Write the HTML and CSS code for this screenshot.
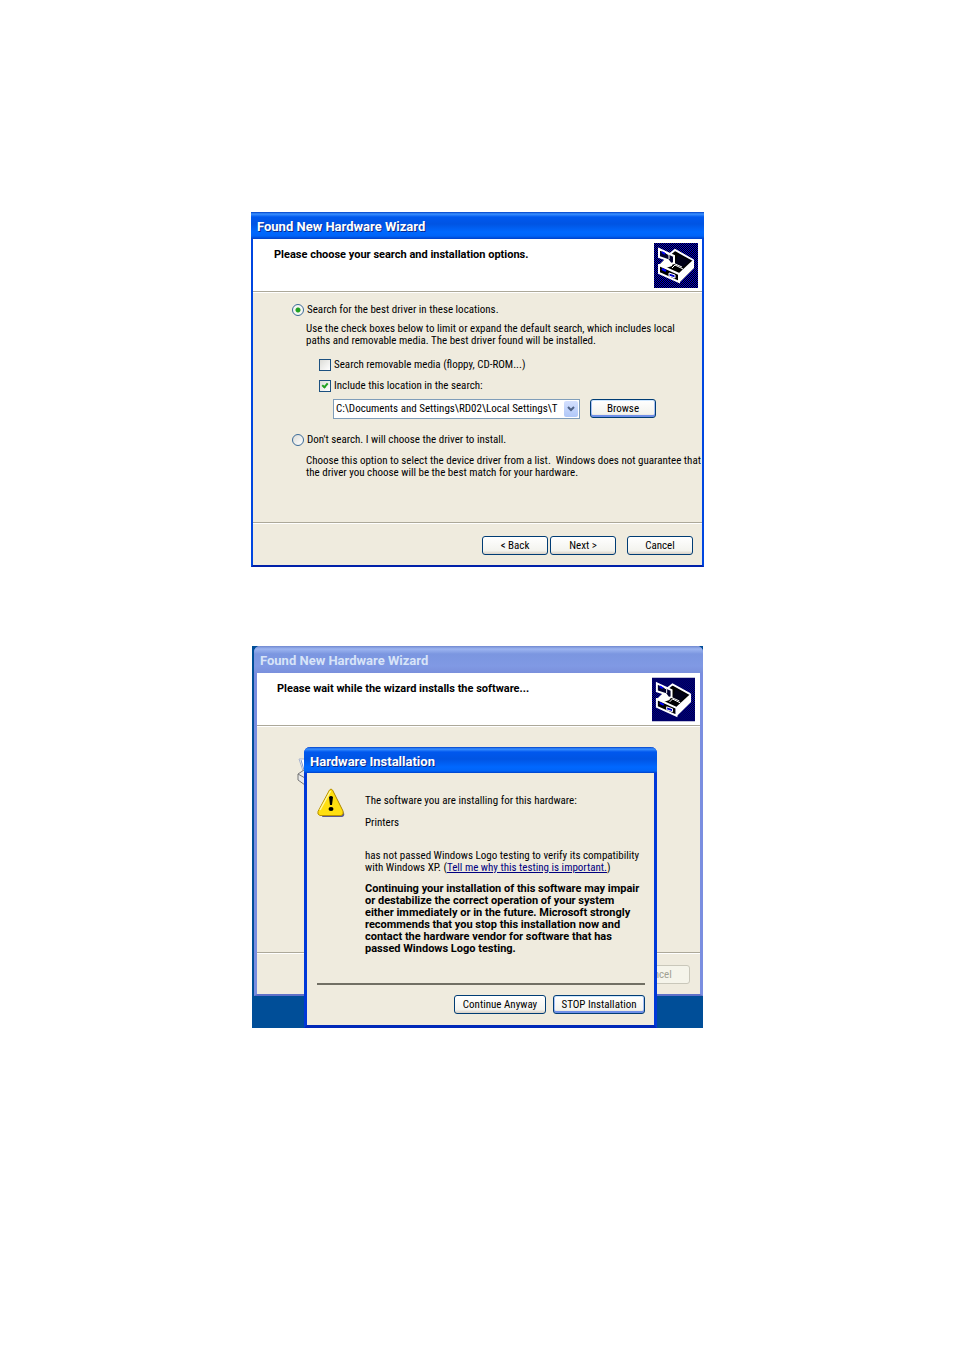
FILE: index.html
```
<!DOCTYPE html>
<html lang="en">
<head>
  <meta charset="UTF-8">
  <meta name="viewport" content="width=device-width, initial-scale=1.0">
  <title>Found New Hardware Wizard</title>
  <link rel="stylesheet" href="styles.css">
</head>
<body>
  <svg class="defs" aria-hidden="true">
    <defs>
      <pattern id="dots" width="4" height="4" patternUnits="userSpaceOnUse">
        <rect width="4" height="4" fill="#0000d0"/>
        <path d="M0 0h1v1H0zM2 0h1v1H2zM1 1h1v1H1zM3 1h1v1H3zM0 2h1v1H0zM2 2h1v1H2zM1 3h1v1H1zM3 3h1v1H3z" fill="#000"/>
      </pattern>
      <symbol id="device" viewBox="0 0 44 45">
        <rect width="44" height="45" fill="url(#dots)"/>
        <path d="M21 8l18 10-14 13-19-9z" fill="#000"/>
        <path d="M5 21l19 10v8L5 30z" fill="#000"/>
        <path d="M16 11l5-4 18 10" fill="none" stroke="#fff" stroke-width="2"/>
        <path d="M24 12l12 6-7 6-8-3z" fill="#000018"/>
        <path d="M18 25l3-3 8 4M19 20l9 4" fill="none" stroke="#fff" stroke-width="1"/>
        <path d="M25 30l15-14v9L25 40z" fill="#fff"/>
        <path d="M5 21v9l20 9v-8L5 22" fill="none" stroke="#fff" stroke-width="2"/>
        <path d="M5 22l6-6 8 2-1 5-6 2z" fill="#fff"/>
        <path d="M5 6l15 7v7l-3 1-3-4-9-3z" fill="#000030" stroke="#fff" stroke-width="2"/>
        <path d="M12 10l3 2v4" fill="none" stroke="#fff" stroke-width="1"/>
        <path d="M15 30l6 2v3l-6-2z" fill="#00c" stroke="#fff" stroke-width="1"/>
        <path d="M8 9l3 2M8 26l4 2" stroke="#0000ff" stroke-width="2"/>
      </symbol>
    </defs>
  </svg>

  <main class="page">
    <section class="window">
      <h2 class="title">Found New Hardware Wizard</h2>
      <header class="header">
        <h3>Please choose your search and installation options.</h3>
        <svg class="device" viewBox="0 0 44 45"><use href="#device"/></svg>
      </header>
      <form id="options" class="content">
        <label class="choice"><input type="radio" name="mode" checked> Search for the best driver in these locations.</label>
        <p class="note">Use the check boxes below to limit or expand the default search, which includes local<br>paths and removable media. The best driver found will be installed.</p>
        <label class="choice check first"><input type="checkbox"> Search removable media (floppy, CD-ROM...)</label>
        <label class="choice check"><input type="checkbox" checked> Include this location in the search:</label>
        <div class="location">
          <div class="combo">
            <select aria-label="Location">
              <option>C:\Documents and Settings\RD02\Local Settings\T</option>
            </select>
            <svg class="arrow" viewBox="0 0 14 16"><path d="M4 6l3 3 3-3" fill="none" stroke="#4d6185" stroke-width="2"/></svg>
          </div>
          <button type="button" class="focus">Browse</button>
        </div>
        <label class="choice second"><input type="radio" name="mode"> Don't search. I will choose the driver to install.</label>
        <p class="note">Choose this option to select the device driver from a list.&nbsp; Windows does not guarantee that<br>the driver you choose will be the best match for your hardware.</p>
      </form>
      <footer class="footer">
        <button type="button">&lt; Back</button>
        <button type="button">Next &gt;</button>
        <button type="button" class="cancel">Cancel</button>
      </footer>
    </section>

    <section class="desktop">
      <div class="window inactive">
        <h2 class="title">Found New Hardware Wizard</h2>
        <header class="header">
          <h3>Please wait while the wizard installs the software...</h3>
          <svg class="device" viewBox="0 0 44 45"><use href="#device"/></svg>
        </header>
        <div class="content">
          <svg class="printer" viewBox="0 0 30 30">
            <path d="M2 2h18l4 12H6z" fill="#fff" stroke="#a9b4cf"/>
            <path d="M4 3l3 10" stroke="#7f93c8"/>
            <path d="M1 17l6-4h20v10l-5 5H8l-7-5z" fill="#e8e8e8" stroke="#777"/>
            <path d="M1 17l7 4h19M8 21v7" fill="none" stroke="#777"/>
          </svg>
        </div>
        <footer class="footer">
          <button type="button" disabled>Cancel</button>
        </footer>
      </div>

      <div class="dialog" role="dialog" aria-labelledby="install-title">
        <h2 class="title" id="install-title">Hardware Installation</h2>
        <div class="message">
          <svg class="warning" viewBox="0 0 28 30">
            <path d="M16 3l11 22q1 3-2 4H5z" fill="#5a5a90"/>
            <path d="M12.500 2q1.500-2 3 0l10.500 21q1 4-2 4.500H3q-3-1-2-4z" fill="#ffdf10" stroke="#b89000"/>
            <path d="M13.500 3L3 22" stroke="#fff7a0" stroke-width="1.500"/>
            <path d="M12 9q2-2 4 0l-1 8h-2z" fill="#000"/>
            <ellipse cx="14" cy="21" rx="2.500" ry="2" fill="#000"/>
          </svg>
          <div class="text">
            <p>The software you are installing for this hardware:</p>
            <p>Printers</p>
            <p class="reason">has not passed Windows Logo testing to verify its compatibility<br>with Windows XP. (<a href="#">Tell me why this testing is important.</a>)</p>
            <p class="strong">Continuing your installation of this software may impair<br>or destabilize the correct operation of your system<br>either immediately or in the future. Microsoft strongly<br>recommends that you stop this installation now and<br>contact the hardware vendor for software that has<br>passed Windows Logo testing.</p>
          </div>
        </div>
        <div class="actions">
          <button type="button">Continue Anyway</button>
          <button type="button" class="focus">STOP Installation</button>
        </div>
      </div>
    </section>
  </main>
</body>
</html>
```
FILE: styles.css
```
* { box-sizing: border-box; }
body { margin: 0; background: #fff; color: #000; font: 11px/12px "Roboto Condensed", Roboto, "Liberation Sans", sans-serif; }
h2, h3, p { margin: 0; }
.defs { position: absolute; width: 0; height: 0; }
.page { padding: 212px 16px; }

.window { max-width: 453px; margin: 0 auto; background: #efebde; border: 2px solid #0046e0; border-top: 0; border-bottom-color: #0020a8; }
.title {
  height: 27px; margin: 0 -2px; padding-left: 6px; color: #fff;
  font: bold 13px/30px Roboto, sans-serif; text-shadow: 1px 1px #0a2a8c;
  background: linear-gradient(#0040c8, #3a90ff 2px, #0058ee 5px, #0054e3 12px, #0068ff 20px, #0064f8 24px, #0040c8);
}
.header { display: flex; justify-content: space-between; background: #fff; height: 53px; padding: 4px 4px 0 21px; border-bottom: 1px solid #aca899; }
.header h3 { font: bold 11px/12px Roboto, sans-serif; padding-top: 6px; }
.device { width: 44px; height: 45px; }

.content { border-top: 1px solid #fff; padding: 11px 0 43px 39px; }
.choice { display: flex; align-items: center; gap: 3px; height: 12px; line-height: 14px; white-space: nowrap; }
.choice input { appearance: none; display: grid; place-content: center; width: 12px; height: 12px; margin: 0; border: 1px solid #1c5180; background: linear-gradient(135deg, #dcdcd7, #fff); }
.choice input[type="radio"] { border-radius: 50%; border-color: #3a6a98; }
.choice input[type="radio"]:checked { background: radial-gradient(circle, #21a121 2px, #f6f6f3 3px); }
.choice input[type="checkbox"]:checked::before { content: ""; width: 2px; height: 4px; margin-bottom: 2px; border: solid #21a121; border-width: 0 2px 2px 0; transform: rotate(40deg); }
.note { margin: 7px 0 0 14px; white-space: nowrap; }
.check { margin: 9px 0 0 27px; }
.first { margin-top: 12px; }
.second { margin: 15px 0 9px; }

.location { display: flex; gap: 10px; margin: 7px 0 0 41px; }
.combo { position: relative; width: 247px; }
select { appearance: none; width: 100%; height: 20px; padding: 0 18px 0 2px; border: 1px solid #7f9db9; border-radius: 0; background: #fff; color: #000; font: inherit; }
.arrow { position: absolute; top: 2px; right: 2px; width: 14px; height: 16px; border-radius: 2px; background: linear-gradient(#d4e0fe, #b0c8f8); pointer-events: none; }

button { width: 66px; height: 19px; padding: 0; border: 1px solid #003c74; border-radius: 3px; background: linear-gradient(#fff, #f3f3ee 80%, #d8d0c6); color: #000; font: inherit; }
button.focus { box-shadow: inset 0 1px #cee7ff, inset 0 -2px #6f8fe8, inset 1px 0 #a8c0f5, inset -1px 0 #a8c0f5; }
button:disabled { border-color: #c9c7ba; background: #f5f4ea; color: #a1a192; }
.footer { display: flex; justify-content: flex-end; gap: 2px; padding: 13px 9px 10px; border-top: 1px solid #aca899; box-shadow: inset 0 1px #fff; }
.cancel { margin-left: 9px; }

.desktop { position: relative; max-width: 451px; margin: 79px auto 0; padding: 0 0 32px 2px; background: #004e98; }
.inactive { max-width: none; border-width: 0 3px 2px; border-color: #7a8ee0; border-bottom-color: #6070c8; border-radius: 6px 6px 0 0; }
.inactive .title { margin: 0 -3px; color: #d8e4f8; text-shadow: none; border-radius: 6px 6px 0 0; background: linear-gradient(#7088d0, #9db5f0 3px, #7b96e0 8px, #8099e4 20px, #7a90dc); }
.inactive .header { padding: 4px 5px 0 20px; }
.inactive .device { width: 43px; }
.inactive .content { min-height: 226px; padding: 30px 40px; }
.inactive .footer { padding: 12px 10px 10px; }
.printer { width: 30px; height: 30px; }

.dialog { position: absolute; top: 101px; left: 52px; width: 353px; border: solid #0038d8; border-width: 0 3px 3px; border-bottom-color: #0028b8; border-radius: 6px 6px 0 0; background: #efebde; }
.dialog .title { height: 26px; margin: 0 -3px; border-radius: 6px 6px 0 0; }
.message { display: flex; gap: 20px; margin: 0 9px 0 10px; padding: 15px 0 28px; border-bottom: 2px solid #716f64; }
.warning { width: 28px; height: 30px; }
.text { padding-top: 7px; white-space: nowrap; }
.text p { margin-bottom: 10px; }
.text .reason { margin: 21px 0 9px; }
.text .strong { margin: 0; font: bold 11px/12px Roboto, sans-serif; }
.text a { color: #000080; }
.actions { display: flex; justify-content: flex-end; gap: 7px; padding: 10px 9px 11px; }
.actions button { width: 92px; }
```
